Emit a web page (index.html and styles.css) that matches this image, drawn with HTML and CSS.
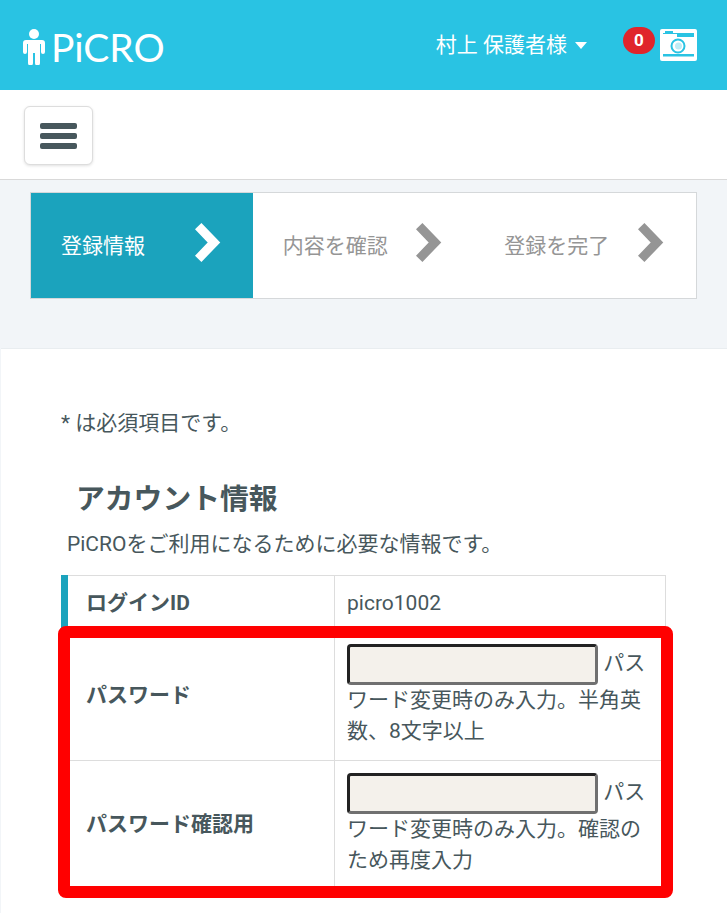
FILE: index.html
```html
<!DOCTYPE html>
<html lang="ja">
<head>
<meta charset="utf-8">
<title>PiCRO</title>
<link rel="stylesheet" href="styles.css">
</head>
<body>
<header class="topbar">
  <a class="logo">
    <svg class="logo-mark" viewBox="0 0 22 36" width="22" height="36"><circle cx="11" cy="5" r="5" fill="#fff"/><path d="M3 11h16a3 3 0 0 1 3 3v9a2 2 0 0 1-4 0V15h-1v19a2 2 0 0 1-5 0V24h-2v10a2 2 0 0 1-5 0V15H4v8a2 2 0 0 1-4 0v-9a3 3 0 0 1 3-3z" fill="#fff"/></svg>
    <span class="logo-text">PiCRO</span>
  </a>
  <div class="user">村上 保護者様<span class="caret"></span></div>
  <div class="cart">
    <span class="badge">0</span>
    <svg class="camera" viewBox="0 0 37 32" width="37" height="32"><rect width="37" height="32" rx="2" fill="#fff"/><rect x="5" y="2" width="8" height="2" fill="#29c3e3"/><rect x="3" y="4" width="31" height="1" fill="#29c3e3"/><rect x="17" y="4" width="17" height="4" fill="#29c3e3"/><rect x="3" y="25" width="31" height="2.500" fill="#29c3e3"/><circle cx="18" cy="17" r="6.500" fill="#fff" stroke="#29c3e3" stroke-width="2"/><circle cx="18.500" cy="17" r="3.500" fill="#bfecf5"/></svg>
  </div>
</header>
<div class="subbar">
  <button class="menu" type="button" aria-label="menu"><span></span><span></span><span></span></button>
</div>
<main class="main">
  <ol class="steps">
    <li class="step step-active"><span>登録情報</span><svg class="chev" viewBox="0 0 26 40" width="26" height="40"><path d="M3.200 3.200L19 19.500L3.200 35.800" fill="none" stroke="currentColor" stroke-width="9"/></svg></li>
    <li class="step"><span>内容を確認</span><svg class="chev" viewBox="0 0 26 40" width="26" height="40"><path d="M3.200 3.200L19 19.500L3.200 35.800" fill="none" stroke="currentColor" stroke-width="9"/></svg></li>
    <li class="step"><span>登録を完了</span><svg class="chev" viewBox="0 0 26 40" width="26" height="40"><path d="M3.200 3.200L19 19.500L3.200 35.800" fill="none" stroke="currentColor" stroke-width="9"/></svg></li>
  </ol>
  <section class="card">
    <p class="note">* は必須項目です。</p>
    <h2 class="title">アカウント情報</h2>
    <p class="lead">PiCROをご利用になるために必要な情報です。</p>
    <div class="table-wrap">
      <table class="form">
        <tr class="row-id">
          <th>ログインID</th>
          <td>picro1002</td>
        </tr>
        <tr>
          <th>パスワード</th>
          <td><input class="field" type="password"> パスワード変更時のみ入力。半角英数、8文字以上</td>
        </tr>
        <tr>
          <th>パスワード確認用</th>
          <td><input class="field" type="password"> パスワード変更時のみ入力。確認のため再度入力</td>
        </tr>
      </table>
      <div class="highlight"></div>
    </div>
  </section>
</main>
</body>
</html>
```
FILE: styles.css
```css
* { box-sizing: border-box; }
html, body { margin: 0; height: 913px; overflow: hidden; }
body {
  font-family: Roboto, "Noto Sans CJK JP", sans-serif;
  font-size: 21px;
  color: #47575c;
  background: #f2f5f8;
}
.topbar {
  height: 90px;
  background: #29c3e3;
  display: flex;
  align-items: flex-start;
  color: #fff;
}
.logo { display: flex; align-items: center; margin: 28px 0 0 23px; }
.logo-mark { display: block; }
.logo-text {
  font-family: Lato, sans-serif;
  font-size: 39px;
  line-height: 38px;
  font-weight: 400;
  margin-left: 6px;
}
.user { margin: 29px 0 0 auto; line-height: 32px; display: flex; align-items: center; }
.caret {
  width: 0; height: 0; margin-left: 8px;
  border-left: 6.500px solid transparent;
  border-right: 6.500px solid transparent;
  border-top: 7px solid #fff;
}
.cart { display: flex; align-items: flex-start; margin: 27px 30px 0 36px; }
.badge {
  width: 32px; height: 27px; border-radius: 14px;
  background: #e0252b;
  font-size: 17px; font-weight: 700;
  line-height: 26px; text-align: center;
  margin-right: 5px;
}
.camera { display: block; margin-top: 2px; }
.subbar {
  height: 90px;
  background: #fff;
  border-bottom: 1px solid #d9d9d9;
  padding: 16px 24px;
}
.menu {
  display: flex; flex-direction: column; gap: 4px; align-items: center; justify-content: center;
  width: 69px; height: 59px; padding: 0;
  background: #fff;
  border: 1px solid #ddd;
  border-radius: 6px;
  box-shadow: 0 1px 3px rgba(0,0,0,.12);
}
.menu span { display: block; width: 37px; height: 6px; border-radius: 2px; background: #47575c; }
.main { padding-top: 12px; }
.steps {
  list-style: none;
  margin: 0 30px 49px;
  padding: 0;
  height: 107px;
  display: flex;
  background: #fff;
  border: 1px solid #d5d8da;
}
.step {
  width: 222px;
  padding: 0 32px 4px 30px;
  display: flex; align-items: center; justify-content: space-between;
  color: #959595;
}
.step-active { background: #1ba3bd; color: #fff; }
.chev { display: block; margin-bottom: 2px; }
.card {
  margin-left: 1px;
  height: 565px;
  background: #fff;
  border-top: 1px solid #e9edf0;
  padding: 59px 61px 0 60px;
}
.note { margin: 0; line-height: 30px; }
.title {
  margin: 41px 0 0 15px;
  font-size: 28.800px;
  line-height: 40px;
  font-weight: 700;
}
.lead { margin: 10px 0 0 6px; line-height: 30px; }
.table-wrap { position: relative; margin-top: 16px; }
.form {
  width: 100%;
  border-collapse: collapse;
  border-left: 7px solid #1ba3bd;
  table-layout: fixed;
}
.form th, .form td {
  border: 1px solid #ddd;
  text-align: left;
  vertical-align: middle;
  line-height: 31px;
}
.form th { width: 270px; padding: 0 18px; font-weight: 700; }
.form td { padding: 12.500px 12px 13px; }
.row-id td, .row-id th { height: 55px; padding-top: 0; padding-bottom: 0; }
.field {
  width: 251px; height: 41px;
  vertical-align: middle;
  margin: 0;
  background: #f4f1eb;
  border-style: solid;
  border-width: 3px;
  border-color: #222 #707070 #707070 #222;
  border-radius: 4px;
  padding: 0;
}
.highlight {
  position: absolute;
  left: -3px; top: 51px;
  width: 615px; height: 272px;
  border: 12px solid #f00;
  border-radius: 8px;
}
```
